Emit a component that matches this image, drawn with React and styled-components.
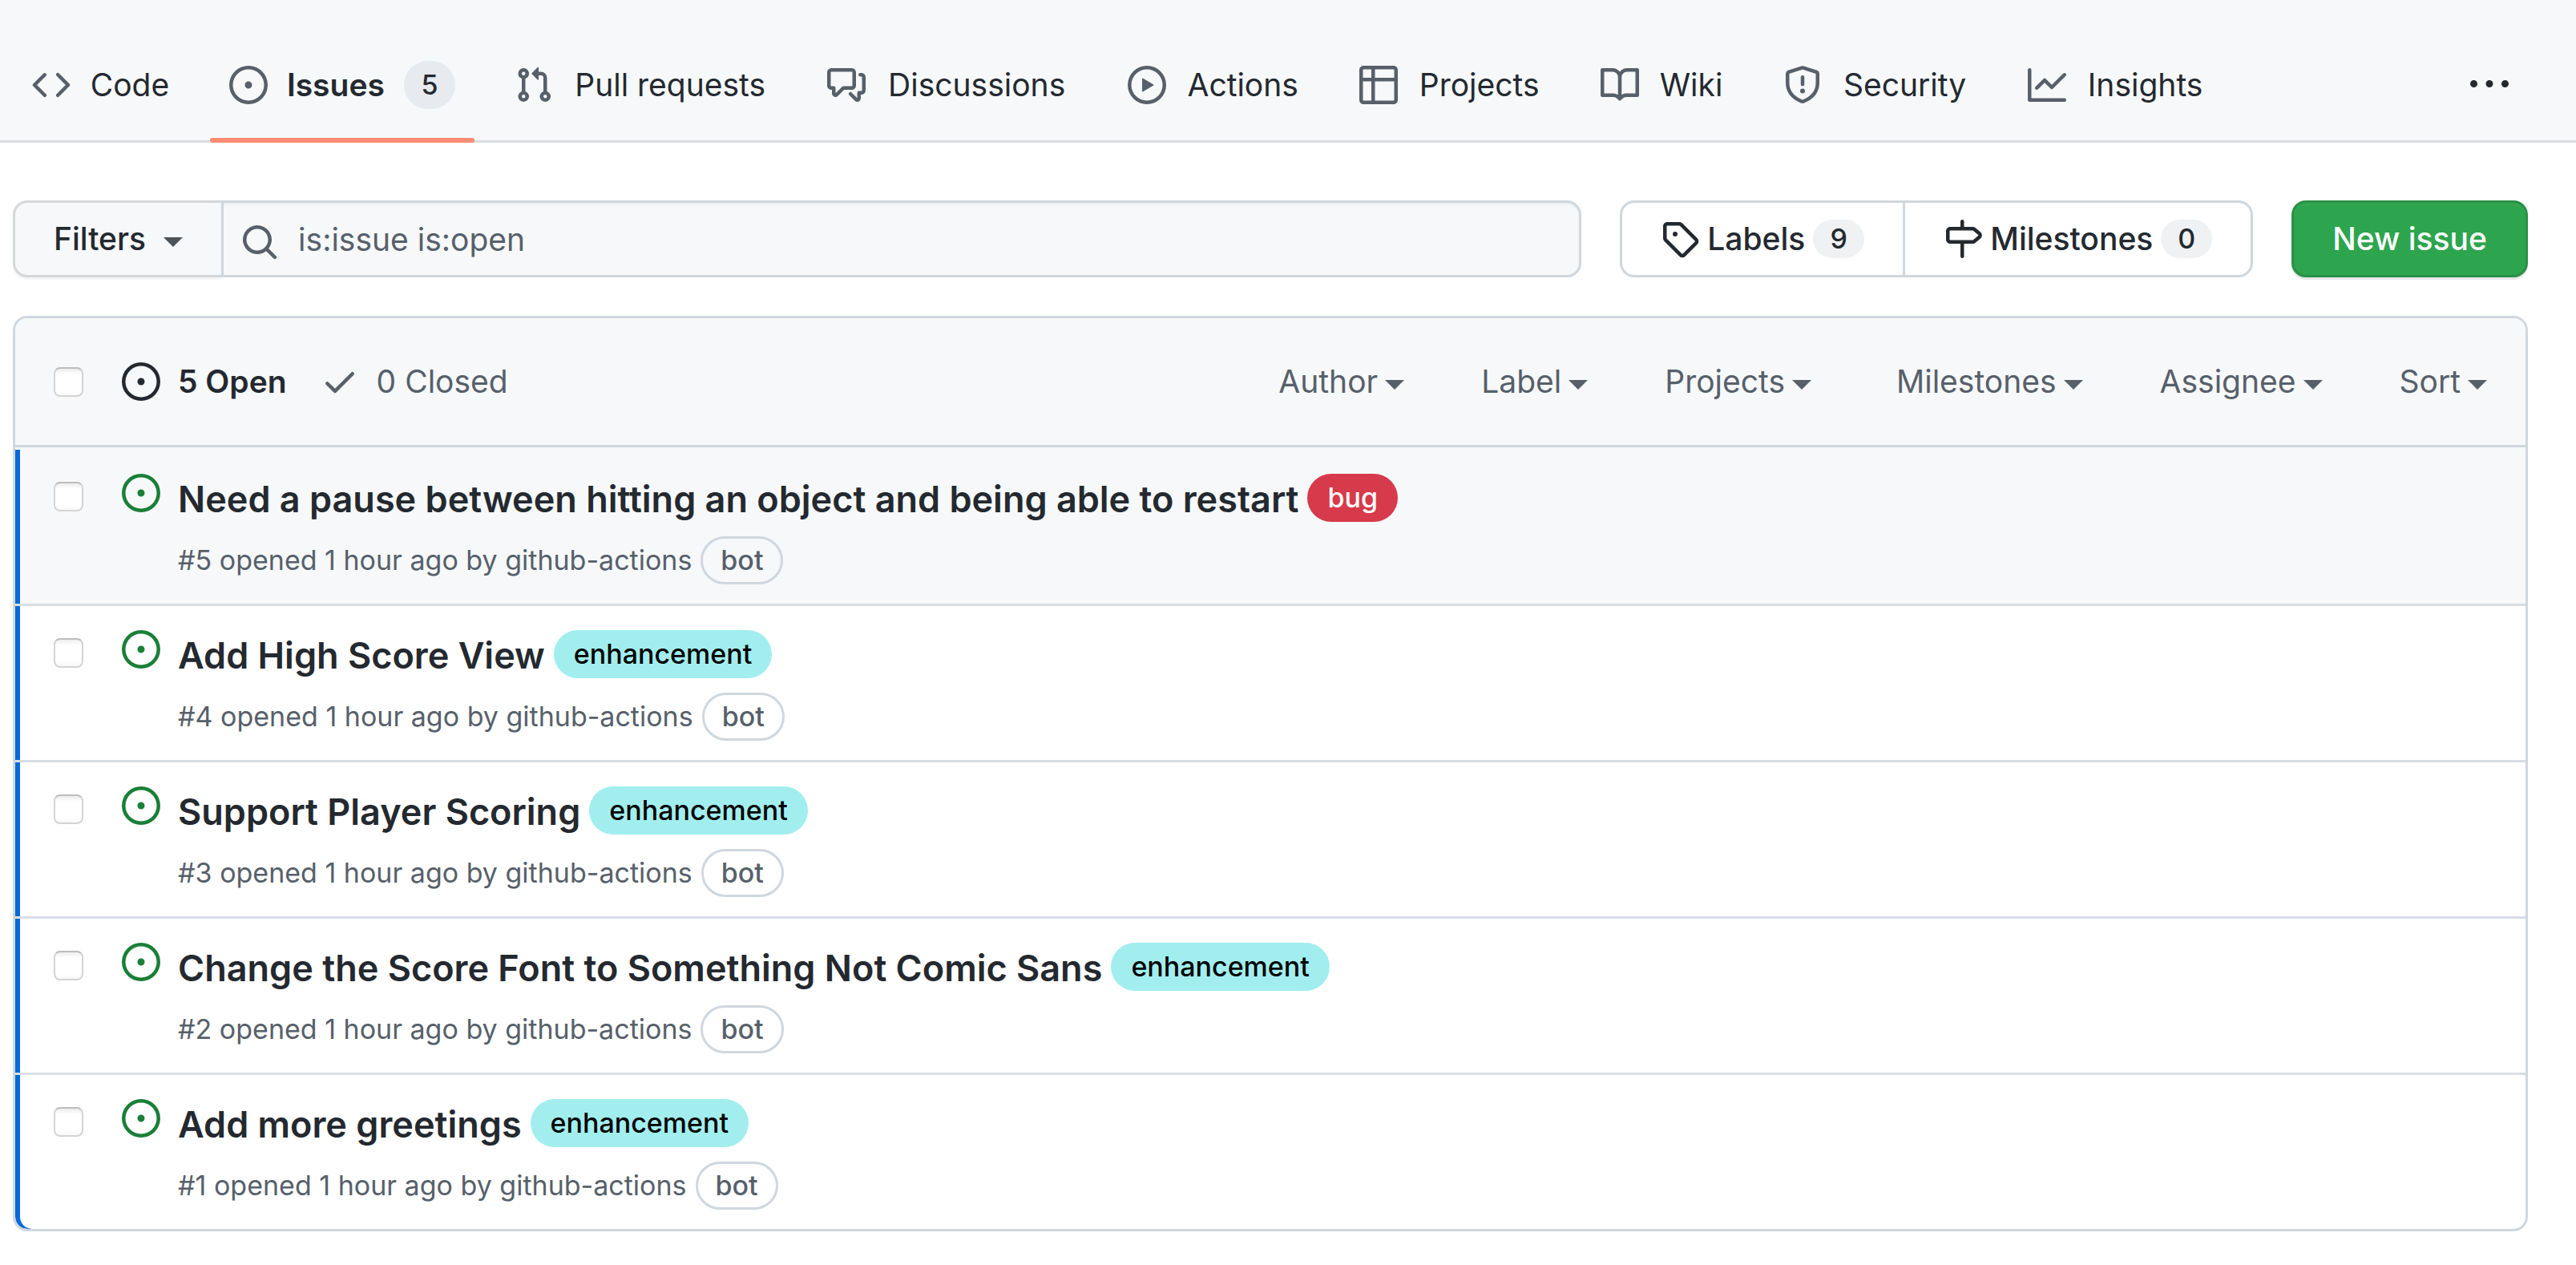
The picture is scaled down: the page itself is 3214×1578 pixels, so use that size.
import React from "react";
import styled, { createGlobalStyle, css } from "styled-components";

const color = {
  text: "#24292f",
  muted: "#57606a",
  border: "#d0d7de",
  borderMuted: "#d8dee4",
  canvas: "#ffffff",
  subtle: "#f6f8fa",
  accent: "#0969da",
  open: "#1a7f37",
  counter: "rgba(175, 184, 193, 0.2)",
};

const GlobalStyle = createGlobalStyle`
  *, *::before, *::after { box-sizing: border-box; }
  body {
    margin: 0;
    background: ${color.canvas};
    color: ${color.text};
    font-family: Inter, "Liberation Sans", sans-serif;
    font-size: 39px;
    line-height: 60px;
  }
  a { color: inherit; text-decoration: none; }
  button, input { font: inherit; color: inherit; margin: 0; }
  ul { list-style: none; margin: 0; padding: 0; }
`;

/* ---------- Icons ---------- */

const paths = {
  code: "M4.72 3.22a.75.75 0 011.06 1.06L2.06 8l3.72 3.72a.75.75 0 11-1.06 1.06L.47 8.53a.75.75 0 010-1.06l4.25-4.25zm6.56 0a.75.75 0 10-1.06 1.06L13.94 8l-3.72 3.72a.75.75 0 101.06 1.06l4.25-4.25a.75.75 0 000-1.06l-4.25-4.25z",
  issue:
    "M8 9.5a1.5 1.5 0 100-3 1.5 1.5 0 000 3zM8 0a8 8 0 100 16A8 8 0 008 0zM1.5 8a6.5 6.5 0 1113 0 6.5 6.5 0 01-13 0z",
  pull: "M7.177 3.073L9.573.677A.25.25 0 0110 .854v4.792a.25.25 0 01-.427.177L7.177 3.427a.25.25 0 010-.354zM3.75 2.5a.75.75 0 100 1.5.75.75 0 000-1.5zm-2.25.75a2.25 2.25 0 113 2.122v5.256a2.251 2.251 0 11-1.5 0V5.372A2.25 2.25 0 011.5 3.25zM11 2.5h-1V4h1a1 1 0 011 1v5.628a2.251 2.251 0 101.5 0V5A2.5 2.5 0 0011 2.5zm1 10.25a.75.75 0 111.5 0 .75.75 0 01-1.5 0zM3.75 12a.75.75 0 100 1.5.75.75 0 000-1.5z",
  discussion:
    "M1.5 2.75a.25.25 0 01.25-.25h8.5a.25.25 0 01.25.25v5.5a.25.25 0 01-.25.25h-3.5a.75.75 0 00-.53.22L3.5 11.44V9.25a.75.75 0 00-.75-.75h-1a.25.25 0 01-.25-.25v-5.5zM1.75 1A1.75 1.75 0 000 2.75v5.5C0 9.216.784 10 1.75 10H2v1.543a1.457 1.457 0 002.487 1.03L7.061 10h3.189A1.75 1.75 0 0012 8.25v-5.5A1.75 1.75 0 0010.25 1h-8.5zM14.5 4.75a.25.25 0 00-.25-.25h-.5a.75.75 0 110-1.5h.5c.966 0 1.75.784 1.75 1.75v5.5A1.75 1.75 0 0114.25 12H14v1.543a1.457 1.457 0 01-2.487 1.03L9.22 12.28a.75.75 0 111.06-1.06l2.22 2.22v-2.19a.75.75 0 01.75-.75h1a.25.25 0 00.25-.25v-5.5z",
  play: "M1.5 8a6.5 6.5 0 1113 0 6.5 6.5 0 01-13 0zM8 0a8 8 0 100 16A8 8 0 008 0zM6.379 5.227A.25.25 0 006 5.442v5.117a.25.25 0 00.379.214l4.264-2.559a.25.25 0 000-.428L6.379 5.227z",
  table:
    "M0 1.75C0 .784.784 0 1.75 0h12.5C15.216 0 16 .784 16 1.75v12.5A1.75 1.75 0 0114.25 16H1.75A1.75 1.75 0 010 14.25V1.75zM1.5 6.5v7.75c0 .138.112.25.25.25H5v-8H1.5zM5 5H1.5V1.75a.25.25 0 01.25-.25H5V5zm1.5 1.5v8h7.75a.25.25 0 00.25-.25V6.5h-8zm8-1.5h-8V1.5h7.75a.25.25 0 01.25.25V5z",
  book: "M0 1.75A.75.75 0 01.75 1h4.253c1.227 0 2.317.59 3 1.501A3.744 3.744 0 0111.006 1h4.245a.75.75 0 01.75.75v10.5a.75.75 0 01-.75.75h-4.507a2.25 2.25 0 00-1.591.659l-.622.621a.75.75 0 01-1.06 0l-.622-.621A2.25 2.25 0 005.258 13H.75a.75.75 0 01-.75-.75V1.75zm8.755 3a2.25 2.25 0 012.25-2.25H14.5v9h-3.757c-.71 0-1.4.201-1.992.572l.004-7.322zm-1.504 7.324l.004-5.073-.002-2.253A2.25 2.25 0 005.003 2.5H1.5v9h3.757a3.75 3.75 0 011.994.574z",
  shield:
    "M7.467.133a1.75 1.75 0 011.066 0l5.25 1.68A1.75 1.75 0 0115 3.48V7c0 1.566-.32 3.182-1.303 4.682-.983 1.498-2.585 2.813-5.032 3.855a1.7 1.7 0 01-1.33 0c-2.447-1.042-4.049-2.357-5.032-3.855C1.32 10.182 1 8.566 1 7V3.48a1.75 1.75 0 011.217-1.667l5.25-1.68zm.61 1.429a.25.25 0 00-.153 0l-5.25 1.68a.25.25 0 00-.174.238V7c0 1.358.275 2.666 1.057 3.86.784 1.194 2.121 2.34 4.366 3.297a.2.2 0 00.154 0c2.245-.956 3.582-2.104 4.366-3.298C13.225 9.666 13.5 8.36 13.5 7V3.48a.25.25 0 00-.174-.237l-5.25-1.68zM8.75 4.75a.75.75 0 00-1.5 0v3a.75.75 0 001.5 0v-3zM9 10.5a1 1 0 11-2 0 1 1 0 012 0z",
  graph:
    "M1.5 1.75a.75.75 0 00-1.5 0v12.5c0 .414.336.75.75.75h14.5a.75.75 0 000-1.5H1.5V1.75zm14.28 2.53a.75.75 0 00-1.06-1.06L10 7.94 7.53 5.47a.75.75 0 00-1.06 0L3.22 8.72a.75.75 0 001.06 1.06L7 7.06l2.47 2.47a.75.75 0 001.06 0l5.25-5.25z",
  kebab:
    "M8 9a1.5 1.5 0 100-3 1.5 1.5 0 000 3zM1.5 9a1.5 1.5 0 100-3 1.5 1.5 0 000 3zm13 0a1.5 1.5 0 100-3 1.5 1.5 0 000 3z",
  search:
    "M11.5 7a4.499 4.499 0 11-8.998 0A4.499 4.499 0 0111.5 7zm-.82 4.74a6 6 0 111.06-1.06l3.04 3.04a.75.75 0 11-1.06 1.06l-3.04-3.04z",
  tag: "M2.5 7.775V2.75a.25.25 0 01.25-.25h5.025a.25.25 0 01.177.073l6.25 6.25a.25.25 0 010 .354l-5.025 5.025a.25.25 0 01-.354 0l-6.25-6.25a.25.25 0 01-.073-.177zm-1.5 0V2.75C1 1.784 1.784 1 2.75 1h5.025c.464 0 .91.184 1.238.513l6.25 6.25a1.75 1.75 0 010 2.474l-5.026 5.026a1.75 1.75 0 01-2.474 0l-6.25-6.25A1.75 1.75 0 011 7.775zM6 5a1 1 0 100 2 1 1 0 000-2z",
  milestone:
    "M7.75 0a.75.75 0 01.75.75V3h3.634c.414 0 .814.147 1.13.414l2.07 1.75a1.75 1.75 0 010 2.672l-2.07 1.75a1.75 1.75 0 01-1.13.414H8.5v5.25a.75.75 0 11-1.5 0V10H2.75A1.75 1.75 0 011 8.25v-3.5C1 3.784 1.784 3 2.75 3H7V.75A.75.75 0 017.75 0zm0 8.5h4.384a.25.25 0 00.161-.06l2.07-1.75a.25.25 0 000-.38l-2.07-1.75a.25.25 0 00-.161-.06H2.75a.25.25 0 00-.25.25v3.5c0 .138.112.25.25.25h5z",
  check:
    "M13.78 4.22a.75.75 0 010 1.06l-7.25 7.25a.75.75 0 01-1.06 0L2.22 9.28a.75.75 0 011.06-1.06L6 10.94l6.72-6.72a.75.75 0 011.06 0z",
};

const Svg = styled.svg`
  flex: none;
  display: block;
  width: 48px;
  height: 48px;
  fill: ${(p) => p.$tone || "currentColor"};
`;

const Icon = ({ name, tone }) => (
  <Svg viewBox="0 0 16 16" aria-hidden="true" $tone={tone}>
    <path fillRule="evenodd" d={paths[name]} />
  </Svg>
);

const Caret = styled.span`
  flex: none;
  margin-top: 8px;
  border: 12px solid transparent;
  border-top-color: currentColor;
  border-bottom-width: 0;
`;

/* ---------- Repository navigation ---------- */

const RepoNav = styled.nav`
  display: flex;
  align-items: center;
  justify-content: space-between;
  padding: 34px 84px 0 16px;
  background: ${color.subtle};
  box-shadow: inset 0 -3px 0 ${color.borderMuted};
`;

const TabList = styled.ul`
  display: flex;
  gap: 26px;
`;

const Tab = styled.a`
  position: relative;
  display: flex;
  align-items: center;
  gap: 24px;
  height: 144px;
  padding: 0 24px;
  white-space: nowrap;
  font-weight: ${(p) => (p.$current ? 600 : 400)};

  ${(p) =>
    p.$current &&
    css`
      &::after {
        content: "";
        position: absolute;
        inset: auto 0 0;
        height: 6px;
        border-radius: 6px;
        background: #fd8c73;
      }
    `}
`;

/* Reserves the width of the bold label so tabs do not shift when selected. */
const TabLabel = styled.span`
  display: grid;
  justify-items: center;

  &::before {
    content: attr(data-content);
    height: 0;
    font-weight: 600;
    visibility: hidden;
  }
`;

const Counter = styled.span`
  min-width: 64px;
  height: ${(p) => (p.$large ? 60 : 48)}px;
  padding: 0 18px;
  border-radius: 30px;
  background: ${color.counter};
  font-size: 34px;
  font-weight: 500;
  line-height: ${(p) => (p.$large ? 60 : 48)}px;
  text-align: center;
`;

const IconButton = styled.button`
  padding: 0;
  border: 0;
  background: none;
  cursor: pointer;
`;

/* ---------- Toolbar ---------- */

const Main = styled.main`
  display: flex;
  flex-direction: column;
  gap: 48px;
  padding: 72px 60px 42px 16px;
`;

const Toolbar = styled.div`
  display: flex;
  gap: 48px;
`;

const control = css`
  display: flex;
  align-items: center;
  height: 96px;
  padding: 0 48px;
  border: 3px solid ${color.border};
  border-radius: 18px;
  font-weight: 500;
  white-space: nowrap;
`;

const SearchGroup = styled.form`
  display: flex;
  flex: 1;
  min-width: 0;
`;

const FiltersButton = styled.button`
  ${control}
  gap: 22px;
  border-color: rgba(27, 31, 36, 0.15);
  border-right: 0;
  border-radius: 18px 0 0 18px;
  background: ${color.subtle};
  box-shadow: 0 3px 0 rgba(27, 31, 36, 0.04);
  cursor: pointer;

  ${Caret} {
    opacity: 0.8;
  }
`;

const SearchField = styled.label`
  position: relative;
  flex: 1;
  min-width: 0;

  ${Svg} {
    position: absolute;
    top: 28px;
    left: 24px;
  }
`;

const SearchInput = styled.input`
  width: 100%;
  height: 96px;
  padding: 0 36px 0 93px;
  border: 3px solid ${color.border};
  border-radius: 0 18px 18px 0;
  background: ${color.subtle};
  box-shadow: inset 0 3px 0 rgba(208, 215, 222, 0.2);
  color: ${color.muted};
`;

const LinkGroup = styled.div`
  display: flex;
`;

const LinkButton = styled.a`
  ${control}
  gap: 10px;

  &:first-child {
    border-right: 0;
    border-radius: 18px 0 0 18px;
  }
  &:last-child {
    border-radius: 0 18px 18px 0;
  }
`;

const PrimaryButton = styled.button`
  ${control}
  border-color: rgba(27, 31, 36, 0.15);
  background: #2da44e;
  box-shadow: 0 3px 0 rgba(27, 31, 36, 0.1),
    inset 0 3px 0 rgba(255, 255, 255, 0.03);
  color: #fff;
  cursor: pointer;
`;

/* ---------- Issue list ---------- */

const Box = styled.section`
  overflow: hidden;
  border: 3px solid ${color.border};
  border-radius: 18px;
`;

const BoxHeader = styled.header`
  display: flex;
  align-items: center;
  justify-content: space-between;
  height: 161px;
  padding: 0 48px;
  border-bottom: 3px solid ${color.border};
  background: ${color.subtle};
`;

const Group = styled.div`
  display: flex;
  align-items: center;
  gap: ${(p) => p.$gap}px;
`;

const Checkbox = styled.input`
  appearance: none;
  flex: none;
  width: 37px;
  height: 37px;
  border: 2px solid #d4d4d4;
  border-top-color: #bdbdbd;
  border-radius: 8px;
  background: linear-gradient(#ececec, #fff 20%, #fff 80%, #f8f8f8);
`;

const StateLink = styled.a`
  display: flex;
  align-items: center;
  gap: 22px;
  color: ${(p) => (p.$selected ? color.text : color.muted)};
  font-weight: ${(p) => (p.$selected ? 600 : 400)};
`;

const FilterButton = styled.button`
  display: flex;
  align-items: center;
  gap: 9px;
  padding: 0 ${(p) => (p.$wide ? 10 : 0)}px 0 0;
  border: 0;
  background: none;
  color: ${color.muted};
  cursor: pointer;
`;

const Row = styled.li`
  display: flex;
  align-items: flex-start;
  height: 195px;
  padding: 30px 48px 0;
  border-top: 3px solid ${color.borderMuted};
  box-shadow: inset 6px 0 0 ${color.accent};

  &:first-child {
    border-top-color: transparent;
    background: ${color.subtle};
  }
  &:last-child {
    border-bottom-left-radius: 15px;
  }

  ${Checkbox} {
    margin: 10px 48px 0 0;
  }
`;

const RowBody = styled.div`
  display: flex;
  flex-direction: column;
  gap: 18px;
  padding-left: 22px;
`;

const Line = styled.div`
  display: flex;
  align-items: center;
  gap: 11px;
  height: 60px;
`;

const Title = styled.a`
  padding-top: 3px;
  font-size: 45px;
  font-weight: 600;
  white-space: nowrap;
`;

const Meta = styled.span`
  color: ${color.muted};
  font-size: 34px;
  white-space: nowrap;
`;

const Pill = styled.span`
  height: 60px;
  padding: 0 25px;
  border-radius: 30px;
  background: ${(p) => p.$bg};
  color: ${(p) => p.$fg};
  font-size: 34px;
  font-weight: 500;
`;

const BotPill = styled(Pill)`
  padding: 0 22px;
  border: 3px solid ${color.border};
  line-height: 54px;
`;

/* ---------- Data ---------- */

const tabs = [
  { name: "Code", icon: "code" },
  { name: "Issues", icon: "issue", count: 5, current: true },
  { name: "Pull requests", icon: "pull" },
  { name: "Discussions", icon: "discussion" },
  { name: "Actions", icon: "play" },
  { name: "Projects", icon: "table" },
  { name: "Wiki", icon: "book" },
  { name: "Security", icon: "shield" },
  { name: "Insights", icon: "graph" },
];

const filters = [
  { name: "Author" },
  { name: "Label" },
  { name: "Projects", wide: true },
  { name: "Milestones" },
  { name: "Assignee" },
  { name: "Sort" },
];

const labels = {
  bug: { $bg: "#d73a4a", $fg: "#ffffff" },
  enhancement: { $bg: "#a2eeef", $fg: "#000000" },
};

const issues = [
  {
    id: 5,
    title: "Need a pause between hitting an object and being able to restart",
    label: "bug",
  },
  { id: 4, title: "Add High Score View", label: "enhancement" },
  { id: 3, title: "Support Player Scoring", label: "enhancement" },
  {
    id: 2,
    title: "Change the Score Font to Something Not Comic Sans",
    label: "enhancement",
  },
  { id: 1, title: "Add more greetings", label: "enhancement" },
];

const IssueRow = ({ id, title, label }) => (
  <Row>
    <Checkbox type="checkbox" aria-label={`Select issue ${id}`} />
    <Icon name="issue" tone={color.open} />
    <RowBody>
      <Line>
        <Title href={`#issue-${id}`}>{title}</Title>
        <Pill {...labels[label]}>{label}</Pill>
      </Line>
      <Line>
        <Meta>#{id} opened 1 hour ago by github-actions</Meta>
        <BotPill $fg={color.muted}>bot</BotPill>
      </Line>
    </RowBody>
  </Row>
);

export default function App() {
  return (
    <>
      <GlobalStyle />
      <RepoNav aria-label="Repository">
        <TabList>
          {tabs.map((t) => (
            <li key={t.name}>
              <Tab
                href={`#${t.icon}`}
                $current={t.current}
                aria-current={t.current ? "page" : undefined}
              >
                <Icon name={t.icon} tone={color.muted} />
                <TabLabel data-content={t.name}>{t.name}</TabLabel>
                {t.count !== undefined && <Counter $large>{t.count}</Counter>}
              </Tab>
            </li>
          ))}
        </TabList>
        <IconButton type="button" aria-label="More">
          <Icon name="kebab" />
        </IconButton>
      </RepoNav>

      <Main>
        <Toolbar>
          <SearchGroup role="search">
            <FiltersButton type="button">
              Filters
              <Caret />
            </FiltersButton>
            <SearchField>
              <SearchInput
                type="text"
                aria-label="Search all issues"
                defaultValue="is:issue is:open"
              />
              <Icon name="search" tone={color.muted} />
            </SearchField>
          </SearchGroup>
          <LinkGroup>
            <LinkButton href="#labels">
              <Icon name="tag" />
              Labels
              <Counter>9</Counter>
            </LinkButton>
            <LinkButton href="#milestones">
              <Icon name="milestone" />
              Milestones
              <Counter>0</Counter>
            </LinkButton>
          </LinkGroup>
          <PrimaryButton type="button">New issue</PrimaryButton>
        </Toolbar>

        <Box aria-label="Issues">
          <BoxHeader>
            <Group $gap={48}>
              <Checkbox type="checkbox" aria-label="Select all issues" />
              <Group $gap={42}>
                <StateLink href="#open" $selected>
                  <Icon name="issue" />5 Open
                </StateLink>
                <StateLink href="#closed">
                  <Icon name="check" />0 Closed
                </StateLink>
              </Group>
            </Group>
            <Group $gap={96}>
              {filters.map((f) => (
                <FilterButton type="button" key={f.name} $wide={f.wide}>
                  {f.name}
                  <Caret />
                </FilterButton>
              ))}
            </Group>
          </BoxHeader>
          <ul>
            {issues.map((issue) => (
              <IssueRow key={issue.id} {...issue} />
            ))}
          </ul>
        </Box>
      </Main>
    </>
  );
}
